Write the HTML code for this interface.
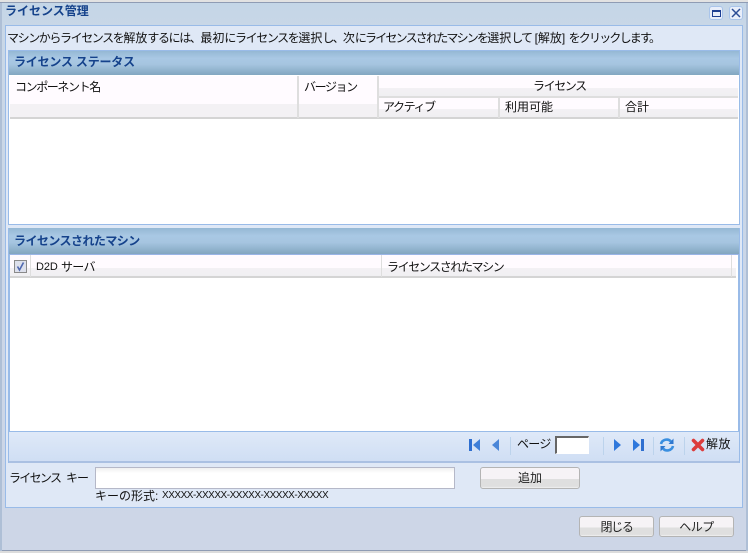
<!DOCTYPE html>
<html lang="ja"><head><meta charset="utf-8">
<style>
html,body{margin:0;padding:0}
body{width:748px;height:553px;overflow:hidden;position:relative;background:#ddd;font-family:"Liberation Sans","WenQuanYi Zen Hei","Noto Sans CJK JP",sans-serif;font-size:12px;color:#111}
div,svg{position:absolute}
i{font-style:normal;letter-spacing:0}
u{text-decoration:none;letter-spacing:-1.8px}
.t{white-space:nowrap;line-height:14px;height:14px;letter-spacing:-1.4px}
.hd{background:linear-gradient(#95b8d4 0,#a9c8e4 30%,#a6c5e0 55%,#82a6c0 100%)}
.ttl{color:#15428b;font-weight:bold;font-size:12px;letter-spacing:0}
.gh{background:linear-gradient(#fffbff 0,#fffbff 60%,#f3f1f4 60%,#f0eff2 100%)}
.sep{background:#dedede;width:2px}
.btn{border:1px solid #b4b4b4;border-radius:3px;background:linear-gradient(#f6f3f6 0,#f6f3f6 55%,#dfdfdf 55%,#dfdfdf 92%,#f2f2f2 100%);text-align:center;box-sizing:border-box;line-height:20px;color:#222}
.tsep{width:1px;height:18px;background:#bcd3ec;top:437px}
</style></head><body>
<div style="left:0;top:0;width:748px;height:2px;background:#e2e2e2"></div>
<div style="left:0;top:2px;width:748px;height:549px;box-sizing:border-box;border-top:1px solid #8f9cb4;border-bottom:1px solid #8f9cb4;background:linear-gradient(#c4d6e7 0,#c9d7e7 30px,#cdd6e7 100%)"></div>
<div style="left:0;top:551px;width:748px;height:2px;background:#dcdcdc"></div>
<div style="left:0;top:3px;width:2px;height:548px;background:#aebfd6"></div>
<div style="left:746px;top:3px;width:2px;height:548px;background:#aebfd6"></div>
<div class="t ttl" style="left:5px;top:4px">ライセンス管理</div>

<div style="left:709px;top:6px;width:12px;height:12px;background:#e8eefa;border:1px solid #a9c4ea;border-radius:3px"></div>
<div style="left:712px;top:10px;width:9px;height:7px;box-sizing:border-box;border:1px solid #1d3f92;border-top:2px solid #1d3f92"></div>
<div style="left:729px;top:6px;width:12px;height:12px;background:#e8eefa;border:1px solid #a9c4ea;border-radius:3px"></div>
<svg style="left:729px;top:6px" width="14" height="14"><path d="M3 3L11 11M11 3L3 11" stroke="#2a4c96" stroke-width="1.5" fill="none"/></svg>

<div style="left:5px;top:25px;width:738px;height:483px;box-sizing:border-box;border:1px solid #99bbe8;background:#dfe8f6"></div>
<div class="t" style="left:7px;top:31px">マシンからライセンスを<i>解放</i>するには、<i>最初</i>にライセンスを<i>選択</i><u>し、</u><i>次</i><u>にライセンスされたマシンを</u><i>選択</i><u>して</u><i> [解放] </i><u>をクリックします。</u></div>

<!-- panel 1 -->
<div style="left:8px;top:50px;width:732px;height:175px;box-sizing:border-box;border:1px solid #99bbe8;background:#fff"></div>
<div class="hd" style="left:9px;top:51px;width:730px;height:24px"></div>
<div class="t ttl" style="left:14px;top:55px;letter-spacing:-.2px">ライセンス ステータス</div>
<div style="left:10px;top:76px;width:728px;height:42px;background:#fffbff"></div>
<div style="left:10px;top:104px;width:287px;height:13px;background:#f3f1f4"></div>
<div style="left:299px;top:104px;width:78px;height:13px;background:#f3f1f4"></div>
<div class="gh" style="left:379px;top:76px;width:359px;height:20px"></div>
<div class="gh" style="left:379px;top:97px;width:359px;height:20px"></div>
<div style="left:378px;top:96px;width:360px;height:2px;background:#dedede"></div>
<div style="left:10px;top:117px;width:728px;height:2px;background:#d4d4d4"></div>
<div class="sep" style="left:297px;top:76px;height:42px"></div>
<div class="sep" style="left:377px;top:76px;height:42px"></div>
<div class="sep" style="left:498px;top:97px;height:21px"></div>
<div class="sep" style="left:618px;top:97px;height:21px"></div>
<div class="t" style="left:15px;top:80px">コンポーネント<i>名</i></div>
<div class="t" style="left:304px;top:80px">バージョン</div>
<div class="t" style="left:533px;top:79px">ライセンス</div>
<div class="t" style="left:383px;top:100px">アクティブ</div>
<div class="t" style="left:505px;top:100px;letter-spacing:0">利用可能</div>
<div class="t" style="left:625px;top:100px;letter-spacing:0">合計</div>

<!-- panel 2 -->
<div style="left:8px;top:228px;width:732px;height:235px;box-sizing:border-box;border:1px solid #99bbe8;background:#fff"></div>
<div style="left:9px;top:255px;width:1px;height:177px;background:#99bbe8"></div>
<div style="left:738px;top:255px;width:1px;height:177px;background:#99bbe8"></div>
<div class="hd" style="left:9px;top:228px;width:730px;height:26px"></div>
<div style="left:9px;top:254px;width:730px;height:1px;background:#99b4e6"></div>
<div class="t ttl" style="left:14px;top:234px;letter-spacing:-.55px">ライセンスされたマシン</div>
<div class="gh" style="left:10px;top:255px;width:726px;height:22px"></div>
<div style="left:10px;top:276px;width:726px;height:2px;background:#d4d4d4"></div>
<div class="sep" style="left:30px;top:255px;height:22px;width:1px"></div>
<div class="sep" style="left:381px;top:255px;height:22px;width:1px"></div>
<div class="sep" style="left:731px;top:255px;height:22px;width:1px"></div>
<div style="left:14px;top:260px;width:11px;height:11px;border:1px solid #8a8a8a;background:#dde0ec"></div>
<svg style="left:14px;top:260px" width="13" height="13"><path d="M3.500 6.500L5.500 10L9.500 2.500" stroke="#5068b0" stroke-width="1.600" fill="none"/></svg>
<div class="t" style="left:36px;top:260px;font-size:11px;letter-spacing:-.1px">D2D</div>
<div class="t" style="left:61px;top:260px;letter-spacing:-.7px">サーバ</div>
<div class="t" style="left:387px;top:260px">ライセンスされたマシン</div>

<!-- toolbar -->
<div style="left:9px;top:431px;width:730px;height:1px;background:#99bbe8"></div>
<div style="left:9px;top:432px;width:730px;height:30px;background:linear-gradient(#dfe9f8,#cfdef4)"></div>
<div style="left:9px;top:461px;width:730px;height:2px;background:#aac0e2"></div>

<svg style="left:468px;top:438px" width="14" height="14"><rect x="1" y="1" width="3" height="12" fill="#2f6fd0"/><path d="M12 1V13L5 7Z" fill="#3f7fd8"/></svg>
<svg style="left:490px;top:438px" width="12" height="14"><path d="M9 1V13L2 7Z" fill="#4a86d8"/></svg>
<div class="tsep" style="left:510px"></div>
<div class="t" style="left:517px;top:437px;letter-spacing:-.7px">ページ</div>
<div style="left:555px;top:436px;width:34px;height:18px;box-sizing:border-box;border:1px solid #fff;border-top:2px solid #666;border-left:2px solid #666;background:#fff"></div>
<div class="tsep" style="left:603px"></div>
<svg style="left:612px;top:438px" width="12" height="14"><path d="M2 1V13L9 7Z" fill="#2f78dc"/></svg>
<svg style="left:632px;top:438px" width="14" height="14"><path d="M1 1V13L8 7Z" fill="#2f78dc"/><rect x="9" y="1" width="3" height="12" fill="#2f6fd0"/></svg>
<div class="tsep" style="left:653px"></div>
<svg style="left:659px;top:437px" width="16" height="16"><path d="M2 7C3 2.500 9 1 12 4.500" stroke="#3a8fe0" stroke-width="2.600" fill="none"/><path d="M14.500 1.500V7H9.500Z" fill="#2f78d0"/><path d="M14 9C13 13.500 7 15 4 11.500" stroke="#3a8fe0" stroke-width="2.600" fill="none"/><path d="M1.500 14.500V9H6.500Z" fill="#2f78d0"/></svg>
<div class="tsep" style="left:684px"></div>
<svg style="left:691px;top:438px" width="14" height="14"><path d="M2.500 2.500L11.500 11.500M11.500 2.500L2.500 11.500" stroke="#dc3c3c" stroke-width="3.600" stroke-linecap="round" fill="none"/></svg>
<div class="t" style="left:706px;top:437px;letter-spacing:.5px">解放</div>

<!-- form -->
<div class="t" style="left:9px;top:471px;letter-spacing:-1.7px">ライセンス</div>
<div class="t" style="left:66px;top:471px;letter-spacing:-1px">キー</div>
<div style="left:95px;top:467px;width:360px;height:22px;box-sizing:border-box;border:1px solid #b5b8c8;background:linear-gradient(#f0f0f0,#fff 5px)"></div>
<div class="t" style="left:95px;top:489px;letter-spacing:0">キーの形式:</div>
<div class="t" style="left:162px;top:489px;font-size:10px;letter-spacing:-.48px">XXXXX-XXXXX-XXXXX-XXXXX-XXXXX</div>
<div class="btn" style="left:480px;top:467px;width:100px;height:22px">追加</div>
<div class="btn" style="left:579px;top:516px;width:75px;height:21px;letter-spacing:-1.300px">閉じる</div>
<div class="btn" style="left:659px;top:516px;width:75px;height:21px;letter-spacing:-.5px">ヘルプ</div>
</body></html>
